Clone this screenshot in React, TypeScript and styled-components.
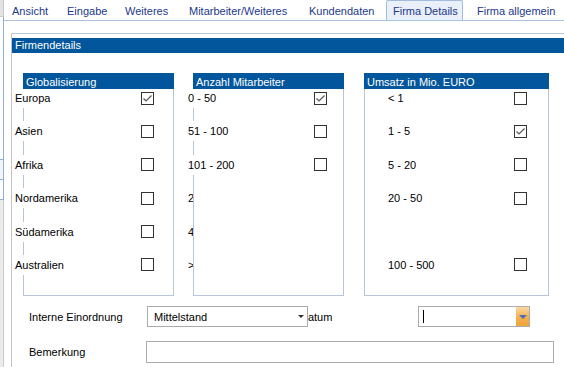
import React from "react";
import styled, { createGlobalStyle } from "styled-components";

const GlobalStyle = createGlobalStyle`
  html, body { margin: 0; padding: 0; background: #fff; }
  body { font-family: "Liberation Sans", Arial, sans-serif; font-size: 11px; color: #000; }
  * { box-sizing: border-box; }
`;

const Page = styled.div`
  width: 564px;
  height: 367px;
  overflow: hidden;
  display: flex;
  background: #fff;
`;

const SideStrip = styled.div`
  width: 4px;
  flex: none;
  display: flex;
  flex-direction: column;
`;

const StripSeg = styled.div<{ $h: number; $bg: string; $line: string }>`
  height: ${(p) => p.$h}px;
  flex: none;
  background: ${(p) => p.$bg};
  border-right: 1px solid ${(p) => p.$line};
  border-bottom: 1px solid ${(p) => p.$line};
`;

const StripRest = styled.div`
  flex: 1;
  background: #ececec;
  border-right: 1px solid #c9c9c9;
`;

const Main = styled.div`
  flex: 1;
  min-width: 0;
  display: flex;
  flex-direction: column;
`;

const TabBar = styled.div`
  display: flex;
  height: 21px;
  flex: none;
  border-bottom: 1px solid #a9c0de;
  white-space: nowrap;
`;

const Tab = styled.div<{ $w: number; $pl: number; $active?: boolean }>`
  flex: none;
  width: ${(p) => p.$w}px;
  height: 20px;
  padding-left: ${(p) => p.$pl}px;
  padding-top: 2px;
  line-height: 18px;
  color: #22398a;
  background: ${(p) => (p.$active ? "#e9f0fa" : "transparent")};
  border: ${(p) => (p.$active ? "1px solid #a3bcdd" : "none")};
  border-bottom: none;
  border-radius: ${(p) => (p.$active ? "2px 2px 0 0" : "0")};
  padding-top: ${(p) => (p.$active ? 1 : 2)}px;
`;

const Content = styled.div`
  margin-top: 12px;
  margin-left: 7px;
  flex: 1;
  border-top: 1px solid #bfc5cc;
  border-left: 1px solid #c4c4c4;
  padding-top: 4px;
  display: flex;
  flex-direction: column;
`;

const SectionHeader = styled.div`
  height: 15px;
  line-height: 15px;
  background: #02569b;
  color: #fff;
  padding-left: 3px;
`;

const Boxes = styled.div`
  display: flex;
  margin-top: 20px;
  padding-left: 11px;
  gap: 19px;
`;

const GroupBox = styled.div<{ $w: number; $ml?: number }>`
  width: ${(p) => p.$w}px;
  height: 223px;
  flex: none;
  margin-left: ${(p) => p.$ml ?? 0}px;
  border: 1px solid #b6c6d8;
  display: flex;
  flex-direction: column;
`;

const BoxHeader = styled.div`
  margin: -1px -1px 0 -1px;
  height: 16px;
  line-height: 14px;
  padding: 2px 0 0 3px;
  background: #02569b;
  color: #fff;
  overflow: hidden;
  white-space: nowrap;
  flex: none;
  position: relative;
  z-index: 1;
`;

const RowList = styled.div`
  display: grid;
  grid-template-rows: repeat(6, 20px);
  row-gap: 13.4px;
  margin-top: -1px;
`;

const Row = styled.div`
  display: flex;
  align-items: center;
  height: 20px;
`;

const RowLabel = styled.span<{ $ml: number }>`
  margin-left: ${(p) => p.$ml}px;
  background: #fff;
  line-height: 20px;
  height: 20px;
  padding-right: 4px;
  white-space: nowrap;
  position: relative;
`;

const HiddenLabel = styled.span<{ $ml: number }>`
  margin-left: ${(p) => p.$ml}px;
  width: 5px;
  overflow: hidden;
  line-height: 20px;
  height: 20px;
  white-space: nowrap;
  flex: none;
`;

const Box = styled.span<{ $mr: number }>`
  margin-left: auto;
  margin-right: ${(p) => p.$mr}px;
  width: 13px;
  height: 13px;
  flex: none;
  border: 1px solid #333;
  background: #fff;
  display: flex;
  align-items: center;
  justify-content: center;
`;

const Form = styled.div`
  margin-top: 10px;
  padding-left: 17px;
  display: flex;
  flex-direction: column;
  gap: 14px;
`;

const FormRow = styled.div`
  display: flex;
  align-items: center;
`;

const FieldLabel = styled.span<{ $w: number; $ml?: number }>`
  width: ${(p) => p.$w}px;
  flex: none;
  margin-left: ${(p) => p.$ml ?? 0}px;
  white-space: nowrap;
`;

const Combo = styled.div`
  position: relative;
  z-index: 1;
  width: 161px;
  height: 21px;
  flex: none;
  border: 1px solid #ababab;
  background: #fff;
  display: flex;
  align-items: center;
  padding-left: 6px;
`;

const ComboArrow = styled.span`
  margin-left: auto;
  margin-right: 3px;
  width: 0;
  height: 0;
  border-left: 3px solid transparent;
  border-right: 3px solid transparent;
  border-top: 3px solid #333;
`;

const DatePicker = styled.div`
  width: 112px;
  height: 21px;
  flex: none;
  border: 1px solid #ababab;
  background: #fff;
  display: flex;
  align-items: center;
`;

const Caret = styled.span`
  width: 1px;
  height: 13px;
  background: #000;
  margin-left: 4px;
`;

const DropButton = styled.span`
  margin-left: auto;
  width: 13px;
  height: 19px;
  background: linear-gradient(#fbd9a6, #f3b04e 55%, #f0a43c);
  display: flex;
  align-items: center;
  justify-content: center;
`;

const BlueArrow = styled.span`
  width: 0;
  height: 0;
  border-left: 4px solid transparent;
  border-right: 4px solid transparent;
  border-top: 4px solid #4d6fb8;
`;

const TextField = styled.div`
  width: 408px;
  height: 22px;
  flex: none;
  border: 1px solid #ababab;
  background: #fff;
`;

const Check = () => (
  <svg width="11" height="11" viewBox="0 0 11 11">
    <polyline points="1.5,5.5 4,8 9.5,2.5" fill="none" stroke="#555" strokeWidth="1.2" />
  </svg>
);

type Item = { label?: string; checked?: boolean; hidden?: boolean; noBox?: boolean };

const CheckGroup = ({
  title,
  items,
  w,
  labelMl,
  mr,
  ml,
}: {
  title: string;
  items: Item[];
  w: number;
  labelMl: number;
  mr: number;
  ml?: number;
}) => (
  <GroupBox $w={w} $ml={ml}>
    <BoxHeader>{title}</BoxHeader>
    <RowList>
      {items.map((it, i) => (
        <Row key={i}>
          {it.label !== undefined &&
            (it.hidden ? (
              <HiddenLabel $ml={labelMl}>{it.label}</HiddenLabel>
            ) : (
              <RowLabel $ml={labelMl}>{it.label}</RowLabel>
            ))}
          {!it.hidden && !it.noBox && <Box $mr={mr}>{it.checked && <Check />}</Box>}
        </Row>
      ))}
    </RowList>
  </GroupBox>
);

export default function App() {
  return (
    <>
      <GlobalStyle />
      <Page>
        <SideStrip>
          <StripSeg $h={17} $bg="#e2e2e2" $line="#c8c8c8" />
          <StripSeg $h={143} $bg="#ffffff" $line="#8eaede" />
          <StripSeg $h={20} $bg="#f4f4f4" $line="#8eaede" />
          <StripSeg $h={20} $bg="#ffffff" $line="#8eaede" />
          <StripRest />
        </SideStrip>
        <Main>
          <TabBar>
            <Tab $w={54} $pl={8}>Ansicht</Tab>
            <Tab $w={58} $pl={9}>Eingabe</Tab>
            <Tab $w={61} $pl={9}>Weiteres</Tab>
            <Tab $w={124} $pl={12}>Mitarbeiter/Weiteres</Tab>
            <Tab $w={85} $pl={8}>Kundendaten</Tab>
            <Tab $w={77} $pl={6} $active>Firma Details</Tab>
            <Tab $w={110} $pl={14}>Firma allgemein</Tab>
          </TabBar>
          <Content>
            <SectionHeader>Firmendetails</SectionHeader>
            <Boxes>
              <CheckGroup
                title="Globalisierung"
                w={151}
                labelMl={-9}
                mr={19}
                items={[
                  { label: "Europa", checked: true },
                  { label: "Asien" },
                  { label: "Afrika" },
                  { label: "Nordamerika" },
                  { label: "Südamerika" },
                  { label: "Australien" },
                ]}
              />
              <CheckGroup
                title="Anzahl Mitarbeiter"
                w={151}
                labelMl={-6}
                mr={16}
                items={[
                  { label: "0 - 50", checked: true },
                  { label: "51 - 100" },
                  { label: "101 - 200" },
                  { label: "201 - 400", hidden: true },
                  { label: "401 - 1000", hidden: true },
                  { label: "> 1000", hidden: true },
                ]}
              />
              <CheckGroup
                title="Umsatz in Mio. EURO"
                w={185}
                ml={1}
                labelMl={23}
                mr={21}
                items={[
                  { label: "< 1" },
                  { label: "1 - 5", checked: true },
                  { label: "5 - 20" },
                  { label: "20 - 50" },
                  { noBox: true },
                  { label: "100 - 500" },
                ]}
              />
            </Boxes>
            <Form>
              <FormRow>
                <FieldLabel $w={118}>Interne Einordnung</FieldLabel>
                <Combo>
                  Mittelstand
                  <ComboArrow />
                </Combo>
                <FieldLabel $w={118} $ml={-8}>Datum</FieldLabel>
                <DatePicker>
                  <Caret />
                  <DropButton>
                    <BlueArrow />
                  </DropButton>
                </DatePicker>
              </FormRow>
              <FormRow>
                <FieldLabel $w={117}>Bemerkung</FieldLabel>
                <TextField />
              </FormRow>
            </Form>
          </Content>
        </Main>
      </Page>
    </>
  );
}
